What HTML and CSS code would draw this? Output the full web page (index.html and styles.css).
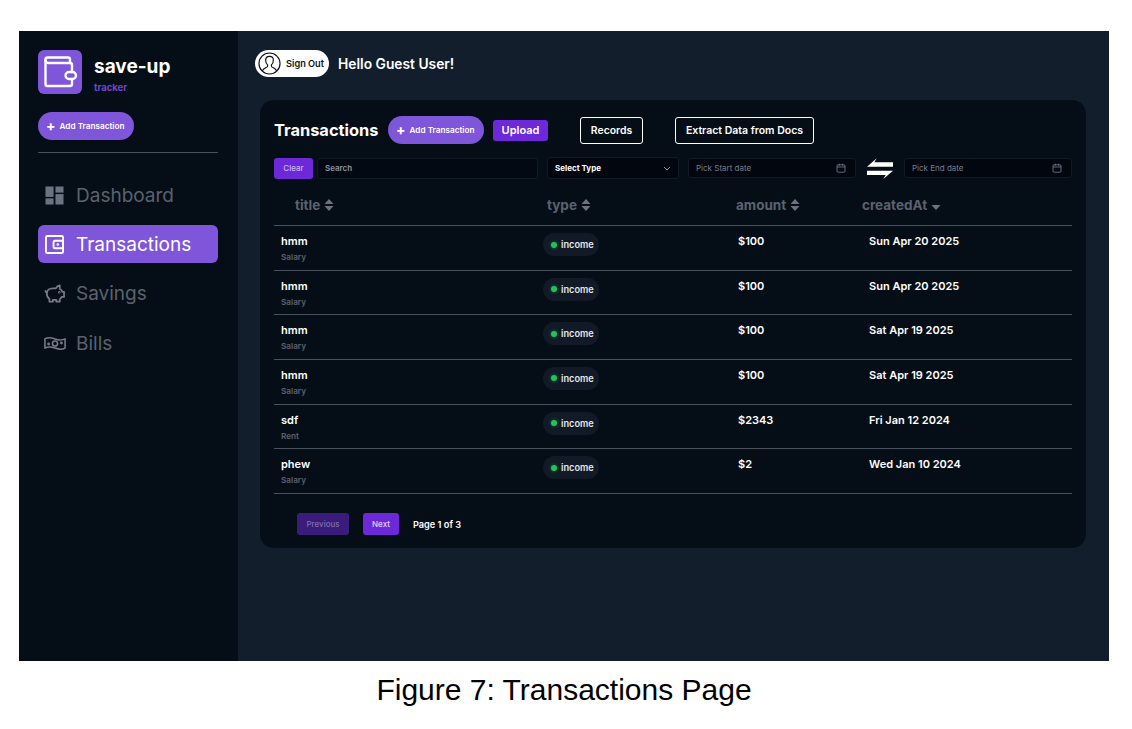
FILE: index.html
```html
<!DOCTYPE html>
<html lang="en">
<head>
<meta charset="utf-8">
<title>Transactions</title>
<link rel="stylesheet" href="styles.css">
</head>
<body>
<div class="app">
  <aside class="sidebar">
    <div class="brand">
      <div class="logo">
        <svg viewBox="0 0 44 44" width="44" height="44" fill="none" stroke="#fff" stroke-width="2.400" stroke-linejoin="round" stroke-linecap="round"><path d="M32 13V9.500a2 2 0 0 0-2-2H9.500a2 2 0 0 0-2 2v24.500a2 2 0 0 0 2 2H32a2 2 0 0 0 2-2v-5"/><path d="M7.500 10.500a3 3 0 0 0 3 2.500H32a2 2 0 0 1 2 2v7"/><rect x="27.500" y="22" width="10.500" height="7" rx="3.500"/></svg>
      </div>
      <div class="brand-text">
        <div class="brand-name">save-up</div>
        <div class="brand-sub">tracker</div>
      </div>
    </div>
    <button class="pill-btn side-add"><span class="plus">+</span>Add Transaction</button>
    <div class="side-rule"></div>
    <nav class="nav">
      <div class="nav-item">
        <svg class="nav-icon" viewBox="0 0 20 20" fill="#6b7280"><rect x="0.500" y="0.500" width="8.500" height="11"/><rect x="0.500" y="13" width="8.500" height="6.500"/><rect x="11" y="0.500" width="8.500" height="6.500"/><rect x="11" y="8.500" width="8.500" height="11"/></svg>
        <span>Dashboard</span>
      </div>
      <div class="nav-item active">
        <svg class="nav-icon" viewBox="0 0 20 20" fill="none" stroke="#fff" stroke-width="2"><rect x="1" y="1" width="18" height="18" rx="1.500"/><rect x="9" y="6" width="10" height="8" rx="1.500"/><circle cx="13.500" cy="10" r=".8" stroke-width="1.200"/></svg>
        <span>Transactions</span>
      </div>
      <div class="nav-item">
        <svg class="nav-icon wide" viewBox="0 0 24 22" fill="none" stroke="#757c88" stroke-width="2" stroke-linejoin="round" stroke-linecap="round"><path d="M17.500 1.500v4c1.500.8 2.500 2 3 3.500h2v6h-2.700c-.6 1-1.300 1.800-2.300 2.500V20.500h-4v-2h-4v2h-4v-3.200C3.300 15.800 2.500 13.500 2.500 11c0-3.500 3-6 7-6h3.500c1-2 2.500-3.200 4.500-3.500z"/><path d="M2.500 10C1.500 9.800 1 9 1 8"/><circle cx="17" cy="9.500" r=".5"/></svg>
        <span>Savings</span>
      </div>
      <div class="nav-item">
        <svg class="nav-icon wide" viewBox="0 0 24 16" fill="none" stroke="#757c88" stroke-width="1.700" stroke-linejoin="round"><path d="M1 3c4-2.500 7-1.500 11 0s7 2 11 0v10c-4 2.500-7 1.500-11 0s-7-2-11 0z"/><circle cx="12" cy="8" r="2.800"/><circle cx="5" cy="8.500" r=".7"/><circle cx="19" cy="7.500" r=".7"/></svg>
        <span>Bills</span>
      </div>
    </nav>
  </aside>
  <main class="main">
    <header class="topbar">
      <button class="signout">
        <svg class="avatar" viewBox="0 0 24 24" fill="none" stroke="#111" stroke-width="1.200"><circle cx="12" cy="12" r="11"/><path d="M4.500 20c.5-3 5-3.500 5.500-5v-1.500C8.500 12 8 10.500 8 8.500 8 6 9.700 4.500 12 4.500S16 6 16 8.500c0 2-.5 3.500-2 5V15c.5 1.500 5 2 5.500 5"/></svg>
        <span>Sign Out</span>
      </button>
      <div class="hello">Hello Guest User!</div>
    </header>
    <section class="panel">
      <div class="title-row">
        <h1 class="title">Transactions</h1>
        <button class="pill-btn panel-add"><span class="plus">+</span>Add Transaction</button>
        <button class="upload">Upload</button>
        <button class="outline records">Records</button>
        <button class="outline extract">Extract Data from Docs</button>
      </div>
      <div class="filters">
        <button class="clear">Clear</button>
        <div class="field search">Search</div>
        <div class="field select"><span>Select Type</span>
          <svg width="8" height="5" viewBox="0 0 8 5" fill="none" stroke="#8b93a1" stroke-width="1"><path d="M1 1l3 3 3-3"/></svg>
        </div>
        <div class="field date start"><span>Pick Start date</span>
          <svg class="cal" viewBox="0 0 10 10" fill="none" stroke="#7b8494" stroke-width="0.800"><rect x="1" y="1.800" width="8" height="7.400" rx="1.200"/><path d="M1 4h8M3.300.7v2M6.700.7v2"/></svg>
        </div>
        <svg class="swap" viewBox="0 0 26 21" fill="#fff"><path d="M0 8.700 9.700.3 7.300 4.300H26V8.700z"/><path d="M0 12.700H26L16.300 21 18.700 17H0z"/></svg>
        <div class="field date end"><span>Pick End date</span>
          <svg class="cal" viewBox="0 0 10 10" fill="none" stroke="#7b8494" stroke-width="0.800"><rect x="1" y="1.800" width="8" height="7.400" rx="1.200"/><path d="M1 4h8M3.300.7v2M6.700.7v2"/></svg>
        </div>
      </div>
      <div class="table">
        <div class="thead">
          <div class="th th-title">title <svg class="sort" viewBox="0 0 10 12" fill="#6b7280"><path d="M5 0l4.500 5h-9zM5 12l4.500-5h-9z"/></svg></div>
          <div class="th th-type">type <svg class="sort" viewBox="0 0 10 12" fill="#6b7280"><path d="M5 0l4.500 5h-9zM5 12l4.500-5h-9z"/></svg></div>
          <div class="th th-amount">amount <svg class="sort" viewBox="0 0 10 12" fill="#6b7280"><path d="M5 0l4.500 5h-9zM5 12l4.500-5h-9z"/></svg></div>
          <div class="th th-date">createdAt <svg class="sort-down" viewBox="0 0 10 6" fill="#6b7280"><path d="M5 6l4.500-5h-9z"/></svg></div>
        </div>
        <div class="row"><div class="c-title"><div class="name">hmm</div><div class="cat">Salary</div></div><div class="c-type"><span class="badge"><i class="dot"></i>income</span></div><div class="c-amount">$100</div><div class="c-date">Sun Apr 20 2025</div></div>
        <div class="row"><div class="c-title"><div class="name">hmm</div><div class="cat">Salary</div></div><div class="c-type"><span class="badge"><i class="dot"></i>income</span></div><div class="c-amount">$100</div><div class="c-date">Sun Apr 20 2025</div></div>
        <div class="row"><div class="c-title"><div class="name">hmm</div><div class="cat">Salary</div></div><div class="c-type"><span class="badge"><i class="dot"></i>income</span></div><div class="c-amount">$100</div><div class="c-date">Sat Apr 19 2025</div></div>
        <div class="row"><div class="c-title"><div class="name">hmm</div><div class="cat">Salary</div></div><div class="c-type"><span class="badge"><i class="dot"></i>income</span></div><div class="c-amount">$100</div><div class="c-date">Sat Apr 19 2025</div></div>
        <div class="row"><div class="c-title"><div class="name">sdf</div><div class="cat">Rent</div></div><div class="c-type"><span class="badge"><i class="dot"></i>income</span></div><div class="c-amount">$2343</div><div class="c-date">Fri Jan 12 2024</div></div>
        <div class="row"><div class="c-title"><div class="name">phew</div><div class="cat">Salary</div></div><div class="c-type"><span class="badge"><i class="dot"></i>income</span></div><div class="c-amount">$2</div><div class="c-date">Wed Jan 10 2024</div></div>
      </div>
      <div class="pager">
        <button class="page-btn prev">Previous</button>
        <button class="page-btn next">Next</button>
        <span class="page-info">Page 1 of 3</span>
      </div>
    </section>
  </main>
</div>
<p class="caption">Figure 7: Transactions Page</p>
</body>
</html>
```
FILE: styles.css
```css
* { box-sizing: border-box; }
html, body { margin: 0; padding: 0; background: #fff; height: 729px; overflow: hidden; }
body { font-family: Inter, "Liberation Sans", sans-serif; padding: 31px 23px 0 19px; }
button { font-family: inherit; border: 0; padding: 0; }

.app { display: flex; width: 1090px; height: 630px; background: #121e2c; }

.sidebar { width: 219px; flex: none; background: #050e17; padding: 19px 19px 0; display: flex; flex-direction: column; }
.brand { display: flex; align-items: center; gap: 12px; }
.logo { width: 44px; height: 44px; background: #7f55d9; border-radius: 6px; }
.logo svg { display: block; }
.brand-text { padding-top: 9px; }
.brand-name { color: #fff; font-size: 19px; font-weight: 700; line-height: 24px; margin-top: -4px; }
.brand-sub { color: #6d46c9; font-size: 9.500px; font-weight: 700; line-height: 12px; margin-top: 3px; }

.pill-btn { display: flex; align-items: center; background: #7f55d9; color: #fff; font-weight: 600; border-radius: 14px; }
.plus { font-weight: 700; }
.side-add { width: 96px; height: 28px; font-size: 8.200px; margin-top: 18px; padding-left: 8px; }
.side-add .plus, .panel-add .plus { font-size: 14px; line-height: 12px; margin-right: 4px; }
.side-rule { height: 1px; background: #4b515c; margin-top: 12px; width: 180px; }

.nav { display: flex; flex-direction: column; gap: 11.200px; margin-top: 23px; }
.nav-item { display: flex; align-items: center; height: 38px; padding-left: 7px; gap: 12px; color: #5b626e; font-size: 19px; border-radius: 6px; width: 180px; }
.nav-item:last-child { margin-top: 1px; }
.nav-item.active { background: #7f55d9; color: #fff; }
.nav-icon { width: 19px; height: 19px; flex: none; }
.nav-icon.wide { width: 22px; margin-left: -1px; margin-right: -2px; }

.main { flex: 1; min-width: 0; padding: 19px 23px 0 22px; display: flex; flex-direction: column; }
.topbar { display: flex; align-items: center; height: 27px; margin-left: -5px; gap: 9px; }
.signout { display: flex; align-items: center; width: 74px; height: 27px; background: #fff; border-radius: 14px; padding-left: 3px; color: #111; font-size: 9.200px; font-weight: 600; gap: 5px; }
.avatar { width: 23px; height: 23px; flex: none; }
.hello { color: #fff; font-size: 13.800px; font-weight: 600; }

.panel { height: 448px; margin-top: 23px; background: #050e17; border-radius: 14px; padding: 15px 14px 0; }
.title-row { display: flex; align-items: center; height: 29px; }
.title { margin: 0; color: #fff; font-size: 16.400px; font-weight: 700; width: 114px; flex: none; }
.panel-add { width: 96px; height: 28px; font-size: 8.200px; padding-left: 8px; flex: none; }
.upload { margin-left: 9px; margin-top: 1px; width: 55px; height: 21px; background: #6d28d9; color: #fff; font-size: 11px; font-weight: 600; border-radius: 3px; flex: none; }
.outline { height: 27px; margin-top: 2px; background: transparent; border: 1.500px solid #fff; color: #fff; font-size: 10.400px; font-weight: 600; border-radius: 3px; flex: none; }
.records { width: 63px; margin-left: 32px; }
.extract { width: 139px; margin-left: 32px; font-size: 10.500px; }

.filters { display: flex; align-items: center; height: 22px; margin-top: 13px; }
.clear { width: 39px; height: 21px; background: #6d28d9; color: #c9b8ee; font-size: 8px; font-weight: 500; border-radius: 3px; flex: none; }
.field { display: flex; align-items: center; justify-content: space-between; height: 21px; background: #030912; border: 1px solid #111a26; border-radius: 3px; font-size: 8px; padding: 0 7px; flex: none; }
.search { width: 221px; margin-left: 4px; color: #8b93a1; font-weight: 600; }
.select { width: 132px; margin-left: 9px; height: 22px; color: #fff; font-weight: 700; background: #02060f; }
.date { color: #767e8c; height: 20px; background: #02060f; }
.start { width: 168px; margin-left: 9px; padding-right: 9px; }
.end { width: 168px; padding-right: 9px; }
.cal { width: 10px; height: 10px; }
.swap { width: 26px; height: 21px; margin: 0 11px; flex: none; }

.table { margin-top: 6px; }
.thead, .row { display: grid; grid-template-columns: 269px 189px 131px 1fr; }
.thead { height: 40px; align-items: center; }
.th { color: #5b626e; font-size: 13.500px; font-weight: 700; display: flex; align-items: center; gap: 4px; }
.th-title { padding-left: 21px; }
.th-type { padding-left: 4px; }
.th-amount { padding-left: 4px; }
.th-date { padding-left: 0; margin-left: -1px; }
.sort { width: 10px; height: 12px; }
.sort-down { width: 10px; height: 6px; margin-top: 4px; }

.row { height: 44.650px; border-top: 1px solid #4b515c; color: #fff; font-size: 11px; font-weight: 600; padding-top: 9px; }
.row:last-child { border-bottom: 1px solid #4b515c; height: 45.650px; }
.c-title { padding-left: 7px; }
.name { font-size: 11px; font-weight: 600; line-height: 12px; }
.cat { color: #5b626e; font-size: 8.200px; font-weight: 600; line-height: 10px; margin-top: 5px; }
.c-type { margin-top: -2px; }
.badge { display: inline-flex; align-items: center; height: 23px; width: 56px; padding-left: 8px; background: #111a26; border-radius: 12px; color: #e5e7eb; font-size: 9.200px; font-weight: 600; }
.dot { width: 6px; height: 6px; border-radius: 50%; background: #1fc45c; margin-right: 4px; box-shadow: 0 0 3px 1px rgba(31, 196, 92, .25); }
.c-amount { padding-left: 6px; line-height: 12px; }
.c-date { padding-left: 6px; line-height: 12px; }

.pager { display: flex; align-items: center; margin-top: 19.500px; padding-left: 23px; }
.page-btn { height: 22px; font-size: 8px; font-weight: 500; border-radius: 3px; }
.prev { width: 52px; background: #3a1c7c; color: #7f6fa8; }
.next { width: 36px; margin-left: 14px; background: #6d28d9; color: #e0d4f7; }
.page-info { margin-left: 14px; color: #fff; font-size: 9.200px; font-weight: 600; }

.caption { margin: 12px 0 0; width: 1090px; text-align: center; color: #000; font-family: "Liberation Sans", Arial, sans-serif; font-size: 30px; line-height: 34px; }
```
